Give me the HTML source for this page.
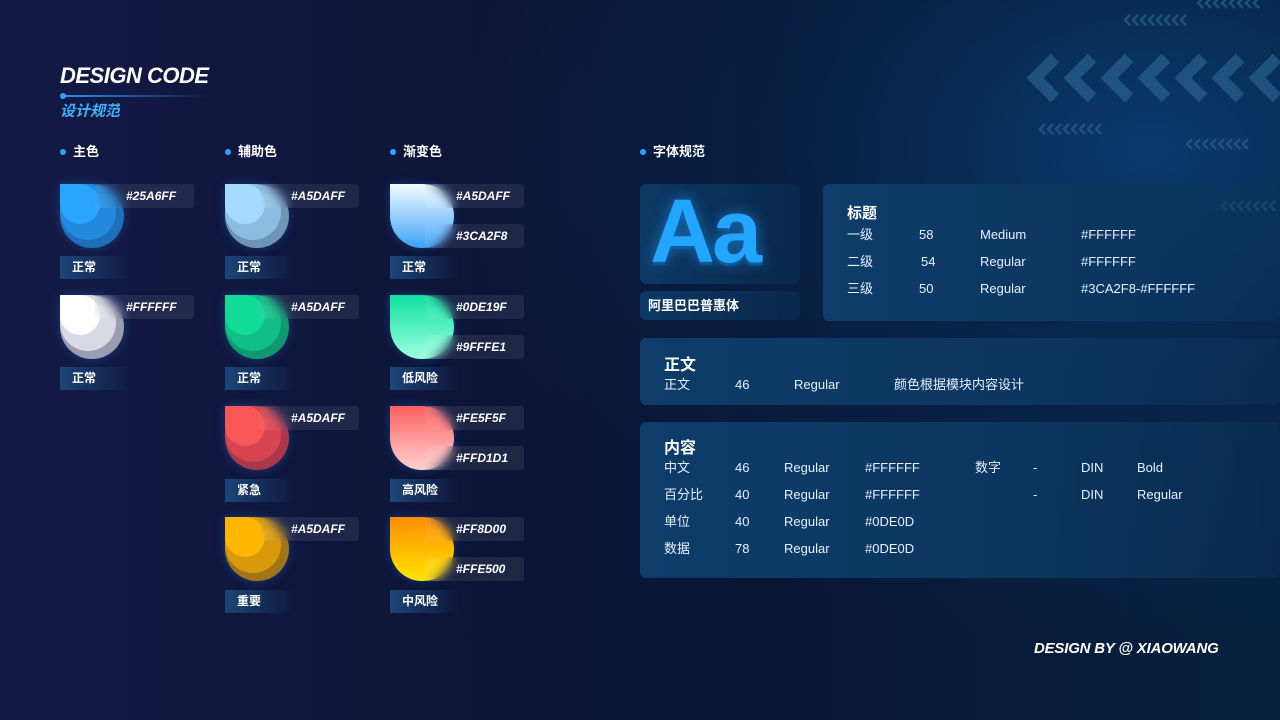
<!DOCTYPE html>
<html><head><meta charset="utf-8"><style>
*{margin:0;padding:0;box-sizing:border-box}
body{width:1280px;height:720px;overflow:hidden;position:relative;font-family:"Liberation Sans","Noto Sans CJK SC",sans-serif;color:#fff;
background:radial-gradient(ellipse 700px 500px at 1150px 150px,#0a3a6e 0%,rgba(8,40,80,.6) 45%,rgba(0,0,0,0) 100%),linear-gradient(90deg,#141a45 0%,#0d1538 35%,#081634 60%,#07213f 100%);}
.a{position:absolute}
.it{font-style:italic;font-weight:bold}
.dot{position:absolute;width:6px;height:6px;border-radius:50%;background:#2aa6ff}
.h{font-size:13px;font-weight:bold;line-height:16px}
.sw{position:absolute;width:64px;height:64px;border-radius:0 50% 50% 50%;box-shadow:0 0 10px rgba(40,140,255,.3)}
.sw i{position:absolute;left:0;top:0;border-radius:0 50% 50% 50%}
.lb{position:absolute;width:99px;height:24px;background:rgba(255,255,255,.08);backdrop-filter:blur(5px);-webkit-backdrop-filter:blur(5px);border-radius:3px;font-size:12px;font-style:italic;font-weight:bold;padding-left:31px;line-height:24px}
.st{position:absolute;width:70px;height:23px;background:linear-gradient(90deg,#1a4678,rgba(26,70,120,0));font-size:12px;font-weight:bold;padding-left:12px;line-height:23px}
.card{position:absolute;border-radius:6px;background:linear-gradient(90deg,#0e3d6a,#0b3660 60%,rgba(11,54,96,.4));}
.t{position:absolute;font-size:13px;line-height:16px;color:#e8f0ff}
</style></head><body>
<svg class="a" style="left:1000px;top:0" width="280" height="220" fill="none" stroke="#2a6690" stroke-opacity=".65">
<g stroke-width="12">
<polyline points="55,58 35,78 55,98"/>
<polyline points="92,58 72,78 92,98"/>
<polyline points="129,58 109,78 129,98"/>
<polyline points="166,58 146,78 166,98"/>
<polyline points="203,58 183,78 203,98"/>
<polyline points="240,58 220,78 240,98"/>
<polyline points="277,58 257,78 277,98"/>
</g>
<g stroke-width="2.5">
<path d="M130 15l-5 5 5 5M138 15l-5 5 5 5M146 15l-5 5 5 5M154 15l-5 5 5 5M162 15l-5 5 5 5M170 15l-5 5 5 5M178 15l-5 5 5 5M186 15l-5 5 5 5"/>
<path d="M45 124l-5 5 5 5M53 124l-5 5 5 5M61 124l-5 5 5 5M69 124l-5 5 5 5M77 124l-5 5 5 5M85 124l-5 5 5 5M93 124l-5 5 5 5M101 124l-5 5 5 5"/>
<path d="M192 139l-5 5 5 5M200 139l-5 5 5 5M208 139l-5 5 5 5M216 139l-5 5 5 5M224 139l-5 5 5 5M232 139l-5 5 5 5M240 139l-5 5 5 5M248 139l-5 5 5 5"/>
<path d="M227 201l-5 5 5 5M235 201l-5 5 5 5M243 201l-5 5 5 5M251 201l-5 5 5 5M259 201l-5 5 5 5M267 201l-5 5 5 5M275 201l-5 5 5 5"/>
<path d="M203 -2l-5 5 5 5M211 -2l-5 5 5 5M219 -2l-5 5 5 5M227 -2l-5 5 5 5M235 -2l-5 5 5 5M243 -2l-5 5 5 5M251 -2l-5 5 5 5M259 -2l-5 5 5 5"/>
</g>
</svg>

<div class="a it" style="left:60px;top:63px;font-size:22px;letter-spacing:-.5px">DESIGN CODE</div>
<div class="a" style="left:64px;top:95px;width:146px;height:2px;background:linear-gradient(90deg,#2a8ee8,rgba(42,142,232,0))"></div>
<div class="dot" style="left:60px;top:93px"></div>
<div class="a it" style="left:60px;top:101px;font-size:15px;color:#3db2ff;height:16px;overflow:hidden;line-height:22px">设计规范</div>

<div class="dot" style="left:60px;top:149px"></div><div class="a h" style="left:73px;top:144px">主色</div>
<div class="dot" style="left:225px;top:149px"></div><div class="a h" style="left:238px;top:144px">辅助色</div>
<div class="dot" style="left:390px;top:149px"></div><div class="a h" style="left:403px;top:144px">渐变色</div>
<div class="dot" style="left:640px;top:149px"></div><div class="a h" style="left:653px;top:144px">字体规范</div>

<div class="sw" style="left:60px;top:184px;background:#1e6fb8"><i style="width:56px;height:56px;background:#2389dc"></i><i style="width:40px;height:40px;background:#29a4ff"></i></div>
<div class="lb" style="left:95px;top:184px">#25A6FF</div>
<div class="st" style="left:60px;top:256px">正常</div>
<div class="sw" style="left:60px;top:295px;background:#9a9cb0"><i style="width:56px;height:56px;background:#d8d9e2"></i><i style="width:40px;height:40px;background:#fff"></i></div>
<div class="lb" style="left:95px;top:295px">#FFFFFF</div>
<div class="st" style="left:60px;top:367px">正常</div>

<div class="sw" style="left:225px;top:184px;background:#7095b4"><i style="width:56px;height:56px;background:#8cbde0"></i><i style="width:40px;height:40px;background:#a5daff"></i></div>
<div class="lb" style="left:260px;top:184px">#A5DAFF</div>
<div class="st" style="left:225px;top:256px">正常</div>
<div class="sw" style="left:225px;top:295px;background:#109870"><i style="width:56px;height:56px;background:#0fbf86"></i><i style="width:40px;height:40px;background:#10dc98"></i></div>
<div class="lb" style="left:260px;top:295px">#A5DAFF</div>
<div class="st" style="left:225px;top:367px">正常</div>
<div class="sw" style="left:225px;top:406px;background:#a8384a"><i style="width:56px;height:56px;background:#d84450"></i><i style="width:40px;height:40px;background:#fa5858"></i></div>
<div class="lb" style="left:260px;top:406px">#A5DAFF</div>
<div class="st" style="left:225px;top:479px">紧急</div>
<div class="sw" style="left:225px;top:517px;background:#a07418"><i style="width:56px;height:56px;background:#d89a0c"></i><i style="width:40px;height:40px;background:#ffb700"></i></div>
<div class="lb" style="left:260px;top:517px">#A5DAFF</div>
<div class="st" style="left:225px;top:590px">重要</div>

<div class="sw" style="left:390px;top:184px;background:linear-gradient(180deg,#f4fbff,#3ca2f8)"></div>
<div class="lb" style="left:425px;top:184px">#A5DAFF</div><div class="lb" style="left:425px;top:224px">#3CA2F8</div>
<div class="st" style="left:390px;top:256px">正常</div>
<div class="sw" style="left:390px;top:295px;background:linear-gradient(180deg,#0de19f,#9fffe1)"></div>
<div class="lb" style="left:425px;top:295px">#0DE19F</div><div class="lb" style="left:425px;top:335px">#9FFFE1</div>
<div class="st" style="left:390px;top:367px">低风险</div>
<div class="sw" style="left:390px;top:406px;background:linear-gradient(180deg,#fe5f5f,#ffd1d1)"></div>
<div class="lb" style="left:425px;top:406px">#FE5F5F</div><div class="lb" style="left:425px;top:446px">#FFD1D1</div>
<div class="st" style="left:390px;top:479px">高风险</div>
<div class="sw" style="left:390px;top:517px;background:linear-gradient(180deg,#ff8d00,#ffe500)"></div>
<div class="lb" style="left:425px;top:517px">#FF8D00</div><div class="lb" style="left:425px;top:557px">#FFE500</div>
<div class="st" style="left:390px;top:590px">中风险</div>

<div class="card" style="left:640px;top:184px;width:160px;height:100px;background:linear-gradient(90deg,#0d3a66,rgba(13,58,102,.3))"></div>
<div class="a" style="left:650px;top:180px;font-size:90px;font-weight:bold;color:#22a6ff;line-height:104px;letter-spacing:-3px;text-shadow:0 3px 0 #0a5aa0,0 0 14px rgba(40,160,255,.6)">Aa</div>
<div class="card" style="left:640px;top:291px;width:160px;height:29px;background:linear-gradient(90deg,#0d3a66,rgba(13,58,102,.3))"></div>
<div class="a" style="left:648px;top:298px;font-size:13px;font-weight:bold;line-height:16px">阿里巴巴普惠体</div>

<div class="card" style="left:823px;top:184px;width:457px;height:137px"></div>
<div class="a" style="left:847px;top:202px;font-size:15px;font-weight:bold">标题</div>
<div class="t" style="left:847px;top:227px">一级</div><div class="t" style="left:919px;top:227px">58</div><div class="t" style="left:980px;top:227px">Medium</div><div class="t" style="left:1081px;top:227px">#FFFFFF</div>
<div class="t" style="left:847px;top:254px">二级</div><div class="t" style="left:921px;top:254px">54</div><div class="t" style="left:980px;top:254px">Regular</div><div class="t" style="left:1081px;top:254px">#FFFFFF</div>
<div class="t" style="left:847px;top:281px">三级</div><div class="t" style="left:919px;top:281px">50</div><div class="t" style="left:980px;top:281px">Regular</div><div class="t" style="left:1081px;top:281px">#3CA2F8-#FFFFFF</div>

<div class="card" style="left:640px;top:338px;width:640px;height:67px"></div>
<div class="a" style="left:664px;top:351px;font-size:16px;font-weight:bold">正文</div>
<div class="t" style="left:664px;top:377px">正文</div><div class="t" style="left:735px;top:377px">46</div><div class="t" style="left:794px;top:377px">Regular</div><div class="t" style="left:894px;top:377px">颜色根据模块内容设计</div>

<div class="card" style="left:640px;top:422px;width:640px;height:156px"></div>
<div class="a" style="left:664px;top:434px;font-size:16px;font-weight:bold">内容</div>
<div class="t" style="left:664px;top:460px">中文</div><div class="t" style="left:735px;top:460px">46</div><div class="t" style="left:784px;top:460px">Regular</div><div class="t" style="left:865px;top:460px">#FFFFFF</div><div class="t" style="left:975px;top:460px">数字</div><div class="t" style="left:1033px;top:460px">-</div><div class="t" style="left:1081px;top:460px">DIN</div><div class="t" style="left:1137px;top:460px">Bold</div>
<div class="t" style="left:664px;top:487px">百分比</div><div class="t" style="left:735px;top:487px">40</div><div class="t" style="left:784px;top:487px">Regular</div><div class="t" style="left:865px;top:487px">#FFFFFF</div><div class="t" style="left:1033px;top:487px">-</div><div class="t" style="left:1081px;top:487px">DIN</div><div class="t" style="left:1137px;top:487px">Regular</div>
<div class="t" style="left:664px;top:514px">单位</div><div class="t" style="left:735px;top:514px">40</div><div class="t" style="left:784px;top:514px">Regular</div><div class="t" style="left:865px;top:514px">#0DE0D</div>
<div class="t" style="left:664px;top:541px">数据</div><div class="t" style="left:735px;top:541px">78</div><div class="t" style="left:784px;top:541px">Regular</div><div class="t" style="left:865px;top:541px">#0DE0D</div>

<div class="a it" style="left:1034px;top:640px;font-size:15px;letter-spacing:-.2px">DESIGN BY @ XIAOWANG</div>
</body></html>
